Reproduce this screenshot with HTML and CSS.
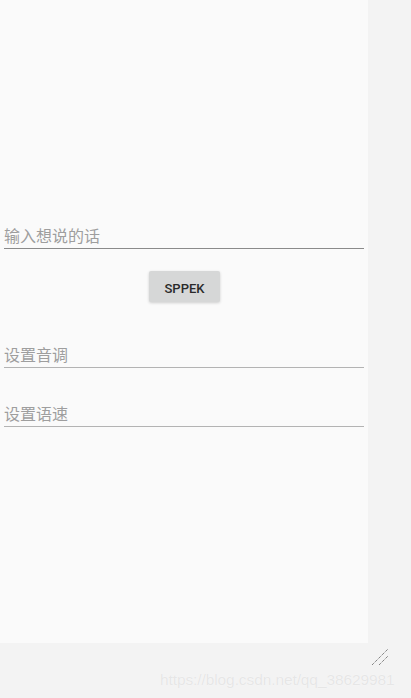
FILE: index.html
```html
<!DOCTYPE html>
<html lang="zh">
<head>
<meta charset="utf-8">
<link rel="stylesheet" href="styles.css">
</head>
<body>
<div class="screen">
  <div class="field focused"><span class="hint">输入想说的话</span></div>
  <button class="btn">SPPEK</button>
  <div class="field f2"><span class="hint">设置音调</span></div>
  <div class="field f3"><span class="hint">设置语速</span></div>
</div>
<div class="footer">
  <svg class="grip" width="20" height="20" viewBox="0 0 20 20">
    <line x1="2" y1="18" x2="18" y2="2" stroke="#555" stroke-width="1" stroke-dasharray="1 1"/>
    <line x1="9" y1="18" x2="18" y2="9" stroke="#555" stroke-width="1" stroke-dasharray="1 1"/>
  </svg>
  <span class="watermark">https://blog.csdn.net/qq_38629981</span>
</div>
</body>
</html>
```
FILE: styles.css
```css
html, body {
  margin: 0;
  padding: 0;
  background: #f3f3f3;
  width: 411px;
  height: 698px;
  overflow: hidden;
}
.screen {
  width: 368px;
  height: 643px;
  background: #fafafa;
  box-sizing: border-box;
  padding: 226px 4px 0 4px;
  display: flex;
  flex-direction: column;
  align-items: stretch;
}
.field {
  height: 22px;
  border-bottom: 1px solid #b3b3b3;
  display: flex;
  align-items: flex-end;
}
.field.focused {
  border-bottom-color: #8a8a8a;
}
.hint {
  font-family: "Noto Sans CJK SC", sans-serif;
  font-size: 16px;
  line-height: 20px;
  padding-bottom: 3px;
  color: #9e9e9e;
}
.btn {
  align-self: center;
  margin-top: 22px;
  width: 71px;
  height: 31px;
  border: none;
  border-radius: 2px;
  background: #d6d7d7;
  box-shadow: 0 1px 3px rgba(0,0,0,0.18);
  font-family: Roboto, sans-serif;
  font-weight: 500;
  font-size: 13px;
  color: #2a2a2a;
  padding: 3px 0 0 1px;
}
.f2 { margin-top: 43px; }
.f3 { margin-top: 36px; }
.footer {
  position: relative;
  height: 55px;
  display: flex;
  justify-content: flex-end;
  padding-right: 21px;
  padding-top: 4px;
  box-sizing: border-box;
}
.grip { display: block; }
.watermark {
  position: absolute;
  left: 160px;
  top: 28px;
  font-family: "Liberation Sans", Arial, sans-serif;
  font-size: 15.5px;
  letter-spacing: -0.1px;
  color: #e6e6e6;
  text-shadow: 0 0 1px #ffffff;
  white-space: nowrap;
}
```
